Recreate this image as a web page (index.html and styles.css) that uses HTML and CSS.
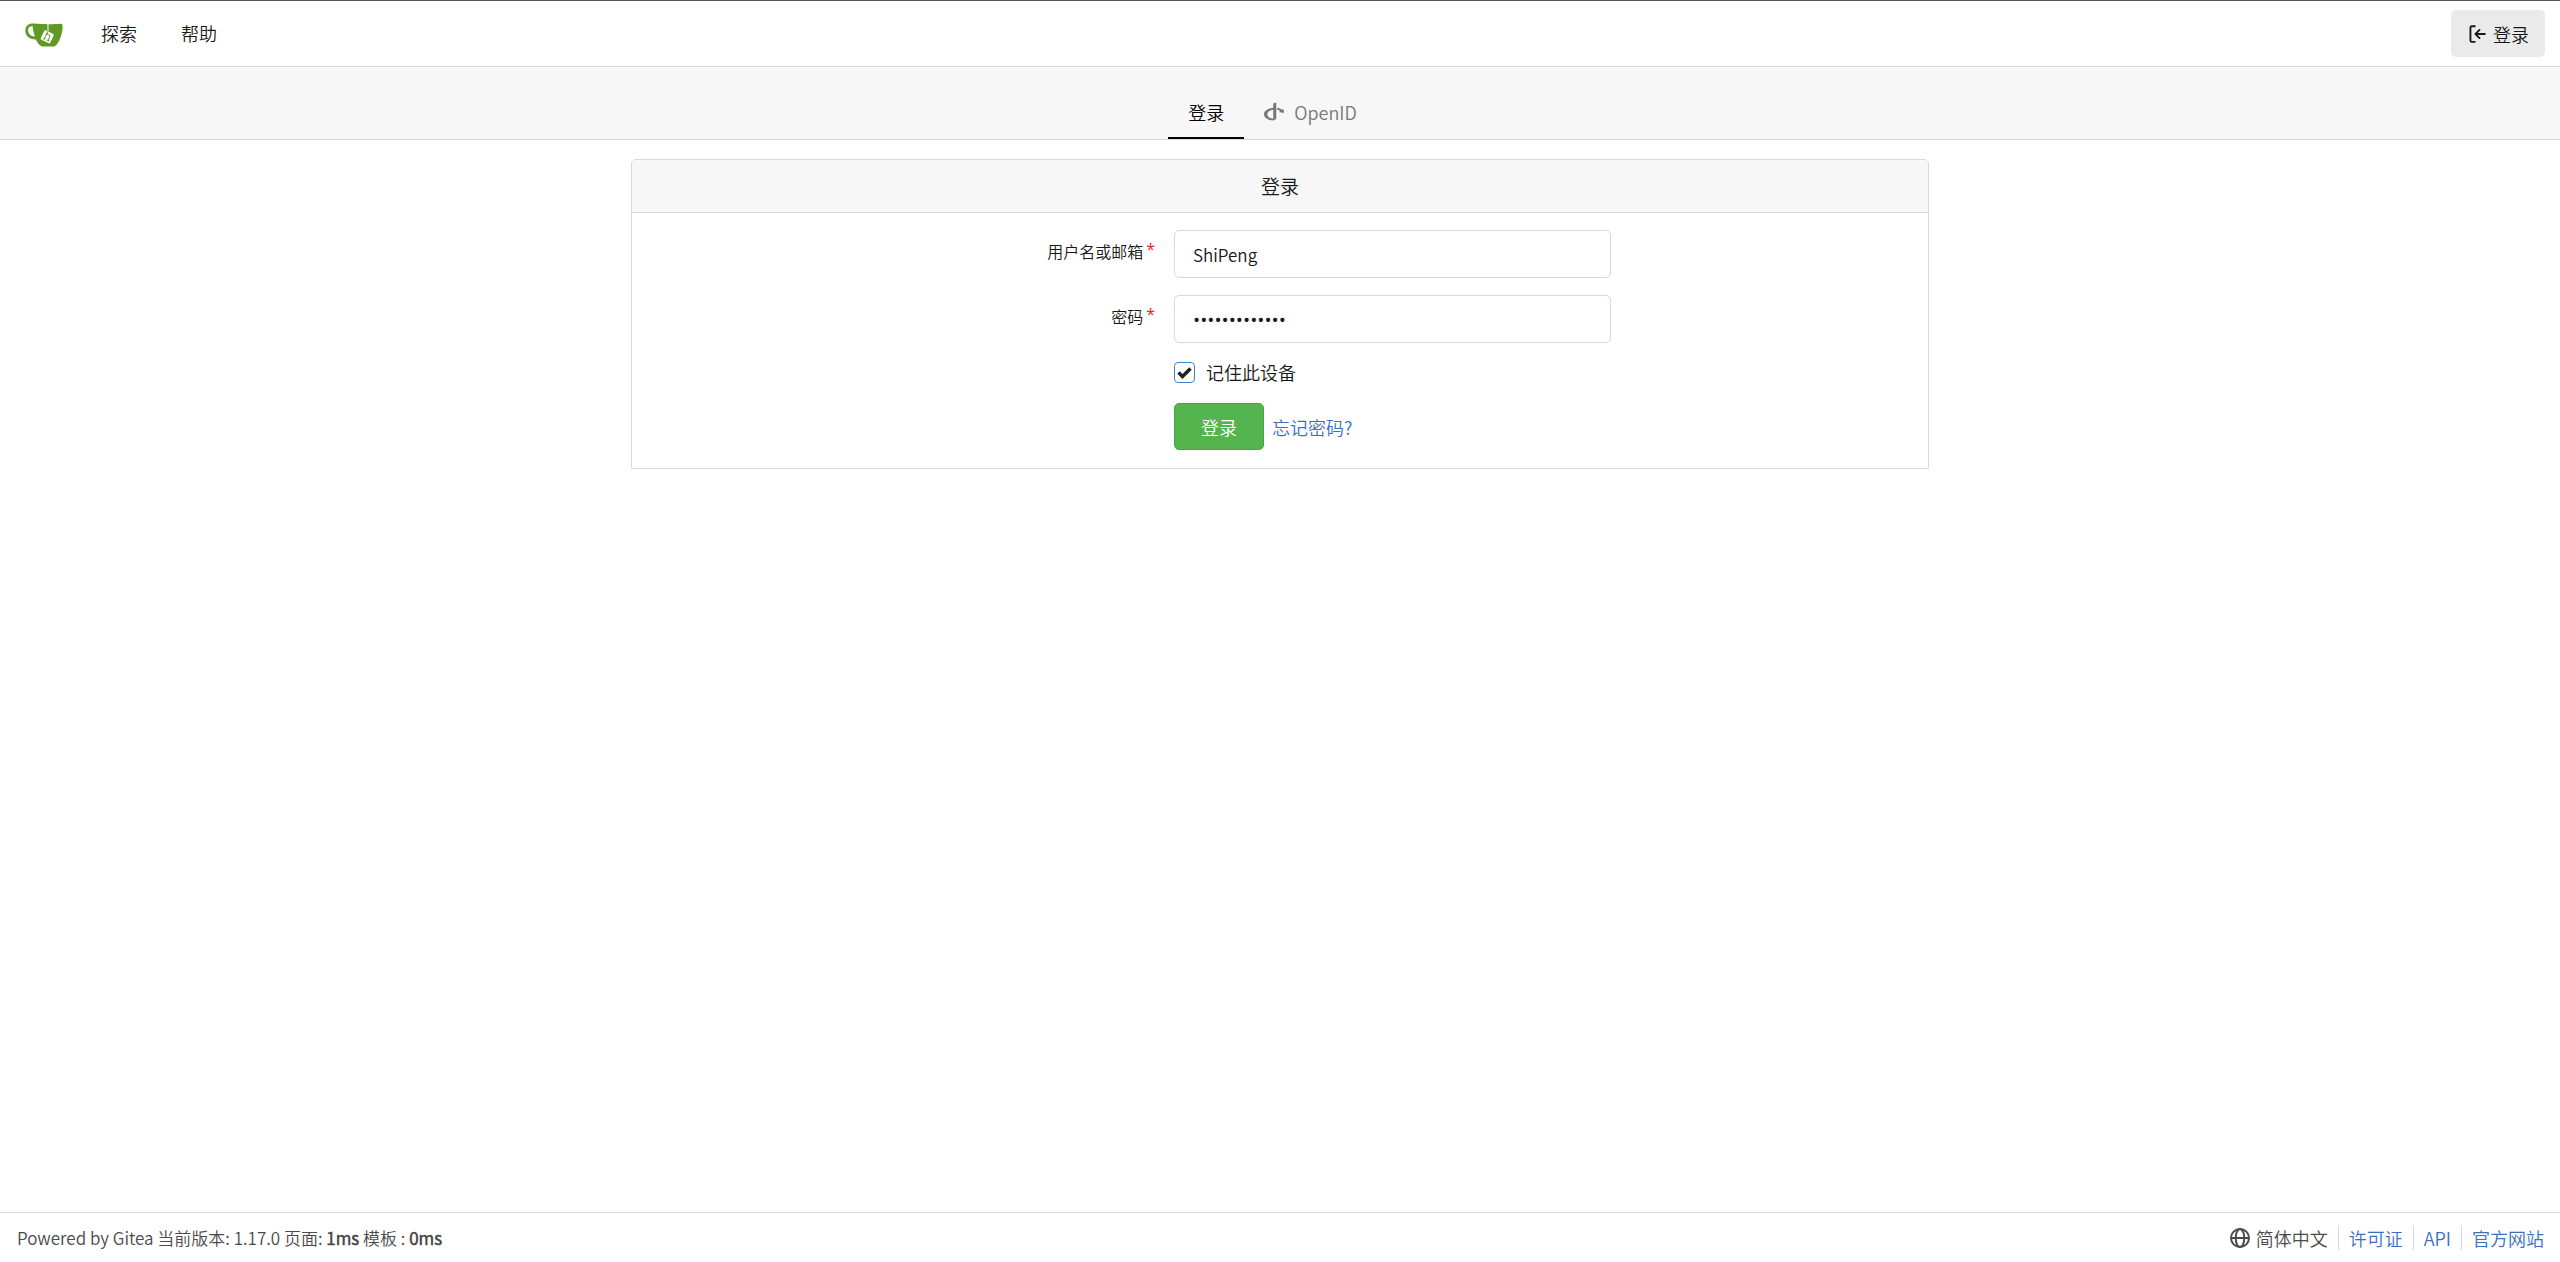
FILE: index.html
```html
<!DOCTYPE html>
<html lang="zh-CN">
<head>
<meta charset="utf-8">
<meta name="viewport" content="width=device-width, initial-scale=1">
<title>登录 - Gitea</title>
<link rel="stylesheet" href="styles.css">
</head>
<body>
<header class="navbar">
  <nav class="navbar-left" aria-label="主导航">
    <a class="brand" href="#" aria-label="Gitea">
      <svg class="logo" viewBox="0 0 640 640" aria-hidden="true">
        <path fill="#fff" d="M395.9 484.2l-126.9-61c-12.5-6-17.9-21.2-11.8-33.8l61-126.9c6-12.5 21.2-17.9 33.8-11.8 17.2 8.3 27.1 13 27.1 13l-.1-109.2 16.7-.1.1 117.1s57.4 24.2 83.1 40.1c3.7 2.3 10.2 6.8 12.9 14.4 2.1 6.1 2 13.1-1 19.3l-61 126.9c-6.2 12.7-21.4 18.1-33.9 12z"/>
        <path fill="#609926" d="M622.7 149.8c-4.1-4.1-9.6-4-9.6-4s-117.2 6.6-177.9 8c-13.3.3-26.5.6-39.6.7v117.2c-5.5-2.6-11.1-5.3-16.6-7.9 0-36.4-.1-109.2-.1-109.2-29 .4-89.2-2.2-89.2-2.2s-141.4-7.1-156.8-8.5c-9.8-.6-22.5-2.1-39 1.5-8.7 1.8-33.5 7.4-53.8 26.9C-4.9 212.4 6.6 276.2 8 285.8c1.7 11.7 6.9 44.2 31.7 72.5 45.8 56.1 144.4 54.8 144.4 54.8s12.1 28.9 30.6 55.5c25 33.1 50.7 58.9 75.7 62 63 0 188.9-.1 188.9-.1s12 .1 28.3-10.3c14-8.5 26.5-23.4 26.5-23.4s12.9-13.8 30.9-45.3c5.5-9.7 10.1-19.1 14.1-28 0 0 55.2-117.1 55.2-231.1-1.1-34.5-9.6-40.6-11.6-42.6zM125.6 353.9c-25.9-8.5-36.9-18.7-36.9-18.7S69.6 321.8 60 295.4c-16.5-44.2-1.4-71.2-1.4-71.2s8.4-22.5 38.5-30c13.8-3.7 31-3.1 31-3.1s7.1 59.4 15.7 94.2c7.2 29.2 24.8 77.7 24.8 77.7s-26.1-3.1-43-9.1zm300.3 107.6s-6.1 14.5-19.6 15.4c-5.8.4-10.3-1.2-10.3-1.2s-.3-.1-5.3-2.1l-112.9-55s-10.9-5.7-12.8-15.6c-2.2-8.1 2.7-18.1 2.7-18.1L322 273s4.8-9.7 12.2-13c.6-.3 2.3-1 4.5-1.5 8.1-2.1 18 2.8 18 2.8l110.7 53.7s12.6 5.7 15.3 16.2c1.9 7.4-.5 14-1.8 17.2-6.3 15.4-55 113.1-55 113.1z"/>
        <path fill="#609926" d="M326.8 380.1c-8.2.1-15.4 5.8-17.3 13.8-1.9 8 2 16.3 9.1 20 7.7 4 17.5 1.8 22.7-5.4 5.1-7.1 4.3-16.9-1.8-23.1l24-49.1c1.5.1 3.7.2 6.2-.5 4.1-.9 7.1-3.6 7.1-3.6 4.2 1.8 8.6 3.8 13.2 6.1 4.8 2.4 9.3 4.9 13.4 7.3.9.5 1.8 1.1 2.8 1.9 1.6 1.3 3.4 3.1 4.7 5.5 1.9 5.5-1.9 14.9-1.9 14.9-2.3 7.6-18.4 40.6-18.4 40.6-8.1-.2-15.3 5-17.7 12.5-2.6 8.1 1.1 17.3 8.9 21.3 7.8 4 17.4 1.7 22.5-5.3 5-6.8 4.6-16.3-1.1-22.6 1.9-3.7 3.7-7.4 5.6-11.3 5-10.4 13.5-30.4 13.5-30.4.9-1.7 5.7-10.3 2.7-21.3-2.5-11.4-12.6-16.7-12.6-16.7-12.2-7.9-29.2-15.2-29.2-15.2s0-4.1-1.1-7.1c-1.1-3.1-2.8-5.1-3.9-6.3 4.7-9.7 9.4-19.3 14.1-29-4.1-2-8.1-4-12.2-6.1-4.8 9.8-9.7 19.7-14.5 29.5-6.7-.1-12.9 3.5-16.1 9.4-3.4 6.3-2.7 14.1 1.9 19.8l-24.6 50.4z"/>
      </svg>
    </a>
    <a class="nav-item" href="#">探索</a>
    <a class="nav-item" href="#">帮助</a>
  </nav>
  <a class="nav-signin" href="#">
    <svg class="icon" viewBox="0 0 16 16" aria-hidden="true"><path d="M2 2.75C2 1.784 2.784 1 3.75 1h2.5a.75.75 0 010 1.5h-2.5a.25.25 0 00-.25.25v10.5c0 .138.112.25.25.25h2.5a.75.75 0 010 1.5h-2.5A1.75 1.75 0 012 13.25V2.75zm6.56 4.5l1.97-1.97a.75.75 0 10-1.06-1.06L6.22 7.47a.75.75 0 000 1.06l3.25 3.25a.75.75 0 101.06-1.06L8.56 8.75h5.69a.75.75 0 000-1.5H8.56z"/></svg>
    登录
  </a>
</header>

<nav class="tabs" aria-label="登录方式">
  <a class="tab tab-active" href="#" aria-current="page">登录</a>
  <a class="tab" href="#">
    <svg class="icon" viewBox="0 0 20 20" aria-hidden="true"><path d="M12.300 .5 9.200 1.500v4.300C4.100 6.200 0 8.700 0 12.200c0 3.500 4.200 6 9.200 6.400l3.100-1.500zM9.200 7.800v8.900c-3.300-.4-5.900-2.100-5.900-4.500 0-2.300 2.500-4 5.900-4.400zM13.200 5.800v2c1.200.2 2.300.6 3.200 1.100l-1.700 1 5.300 1.200-.4-4.100-1.500.8c-1.300-1-3-1.700-4.900-2z"/></svg>
    OpenID
  </a>
</nav>

<main class="content">
  <section class="card">
    <h1 class="card-title">登录</h1>
    <form class="form">
      <div class="field">
        <label class="label" for="user">用户名或邮箱<span class="star">*</span></label>
        <input class="input" id="user" type="text" value="ShiPeng" required>
      </div>
      <div class="field">
        <label class="label" for="password">密码<span class="star">*</span></label>
        <input class="input password" id="password" type="password" value="abcdefghijklm" required>
      </div>
      <div class="field remember">
        <input class="check" id="remember" type="checkbox" checked>
        <label for="remember">记住此设备</label>
      </div>
      <div class="field actions">
        <button class="submit" type="submit">登录</button>
        <a class="link" href="#">忘记密码?</a>
      </div>
    </form>
  </section>
</main>

<footer class="footer">
  <div class="version">Powered by Gitea 当前版本: 1.17.0 页面: <strong>1ms</strong> 模板 : <strong>0ms</strong></div>
  <div class="footer-links">
    <a class="language" href="#">
      <svg class="icon" viewBox="0 0 20 20" aria-hidden="true"><g fill="none" stroke="currentColor" stroke-width="2"><circle cx="10" cy="10" r="9"/><ellipse cx="10" cy="10" rx="4.300" ry="9"/><path d="M1.500 10h17"/></g></svg>
      简体中文
    </a>
    <a class="footer-link" href="#">许可证</a>
    <a class="footer-link" href="#">API</a>
    <a class="footer-link" href="#">官方网站</a>
  </div>
</footer>
</body>
</html>
```
FILE: styles.css
```css
* {
  box-sizing: border-box;
}

body {
  margin: 0;
  min-height: 100vh;
  display: flex;
  flex-direction: column;
  border-top: 1px solid #555;
  background: #fff;
  color: #181818;
  font-family: "Noto Sans CJK SC DemiLight", "Noto Sans CJK SC", sans-serif;
  font-size: 18px;
  font-weight: 350;
  line-height: 24px;
}

a {
  color: inherit;
  text-decoration: none;
}

input,
button {
  font: inherit;
  color: inherit;
}

.icon {
  width: 20px;
  height: 20px;
  flex: none;
  fill: currentColor;
}

.navbar {
  display: flex;
  align-items: center;
  justify-content: space-between;
  height: 66px;
  padding: 0 15px 0 25px;
  border-bottom: 1px solid #d8d8d8;
}

.navbar-left {
  display: flex;
  align-items: center;
  gap: 44px;
}

.brand {
  display: flex;
  margin-right: -6px;
}

.nav-item {
  padding-bottom: 2px;
}

.logo {
  width: 38px;
  height: 38px;
}

.nav-signin {
  display: flex;
  align-items: center;
  gap: 6px;
  height: 47px;
  padding: 0 16px;
  border-radius: 5px;
  background: #eaeaea;
}

.tabs {
  display: flex;
  justify-content: center;
  height: 73px;
  padding: 20px 15px 0 0;
  border-bottom: 1px solid #d8d8d8;
  background: #f7f7f7;
}

.tab {
  display: flex;
  align-items: center;
  gap: 10px;
  padding: 0 20px;
  border-bottom: 2px solid transparent;
  color: #787878;
}

.tab-active {
  border-color: #000;
  color: #000;
}

.content {
  flex: 1;
  padding: 19px 16px;
}

.card {
  max-width: 1298px;
  margin: 0 auto;
  border: 1px solid #d8d8d8;
  border-radius: 5px 5px 0 0;
}

.card-title {
  margin: 0;
  padding: 14px;
  border-bottom: 1px solid #d8d8d8;
  border-radius: 4px 4px 0 0;
  background: #f7f7f7;
  font-size: 19px;
  font-weight: 350;
  line-height: 24px;
  text-align: center;
}

.form {
  display: flex;
  flex-direction: column;
  gap: 17px;
  padding: 17px 0 18px;
}

.field {
  display: flex;
  padding-left: 542px;
}

.field:has(.label) {
  padding-left: 0;
}

.label {
  width: 542px;
  padding: 11px 19px 0 0;
  font-size: 16px;
  line-height: 20px;
  text-align: right;
}

.star {
  margin-left: 3px;
  color: #db2828;
  font-family: "Open Sans", sans-serif;
  font-weight: 400;
  line-height: 1;
  vertical-align: 3px;
}

.input {
  width: 437px;
  height: 48px;
  padding: 0 18px;
  border: 1px solid #d8d8d8;
  border-radius: 5px;
  background: #fff;
  font-size: 17px;
  outline: none;
}

.password {
  padding-top: 2px;
  font-family: "Open Sans", sans-serif;
  font-size: 19px;
  font-weight: 400;
}

.remember {
  align-items: center;
  gap: 11px;
}

.check {
  appearance: none;
  width: 21px;
  height: 21px;
  margin: 0;
  border: 1px solid #4183c4;
  border-radius: 4px;
  background: center / 15px 13px no-repeat url("data:image/svg+xml,%3Csvg xmlns='http://www.w3.org/2000/svg' viewBox='0 0 15 13'%3E%3Cpath d='M1.500 6.500l4 4 8-8' fill='none' stroke='%23212121' stroke-width='3.500'/%3E%3C/svg%3E");
}

.actions {
  align-items: center;
  gap: 8px;
  margin-top: 2px;
}

.submit {
  width: 90px;
  height: 47px;
  padding: 0;
  border: 1px solid #46a546;
  border-radius: 5px;
  background: #54b54e;
  color: #fff;
}

.link {
  color: #3b6fc0;
}

.footer {
  display: flex;
  align-items: center;
  justify-content: space-between;
  height: 50px;
  padding: 0 16px 0 17px;
  border-top: 1px solid #d8d8d8;
  color: #4a4a4a;
}

.version {
  font-size: 17px;
}

.footer strong {
  font-weight: 700;
}

.footer-links {
  display: flex;
  align-items: center;
}

.language {
  display: flex;
  align-items: center;
  gap: 6px;
  padding-right: 10px;
}

.footer-link {
  padding: 0 10px;
  border-left: 1px solid #d8d8d8;
  color: #3b6fc0;
}

.footer-link:last-child {
  padding-right: 0;
}
```
